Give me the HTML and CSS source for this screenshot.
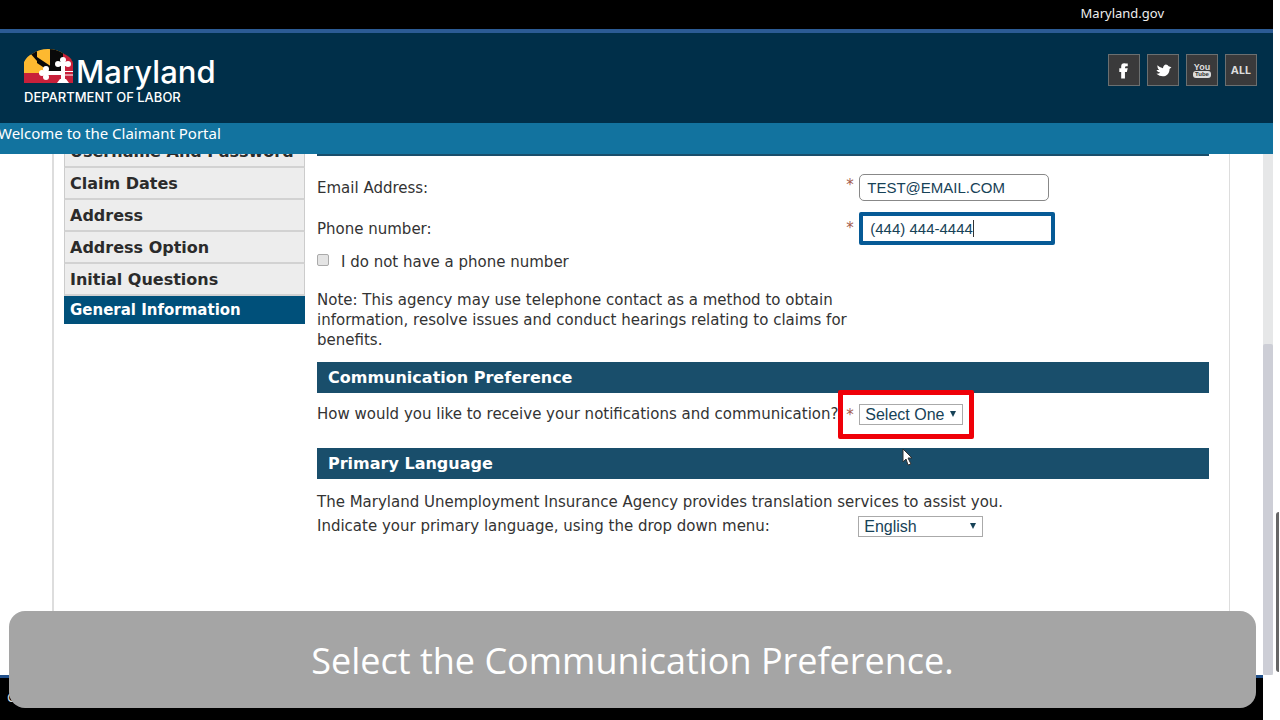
FILE: index.html
```html
<!DOCTYPE html>
<html lang="en">
<head>
<meta charset="utf-8">
<title>Claimant Portal</title>
<link rel="stylesheet" href="styles.css">
</head>
<body>
<div class="screen">
  <div class="topbar"><a href="#">Maryland.gov</a></div>
  <header class="header">
    <div class="brand">
      <div class="brand-row">
        <svg class="flag" viewBox="0 0 49 34" aria-hidden="true">
          <clipPath id="dome"><path d="M0 34V13Q3 7 8 5Q15 0 24 0Q33 0 40 5Q47 8 49 14V34Z"/></clipPath>
          <g clip-path="url(#dome)">
            <path fill="#fdb930" d="M0 0H49V24H0Z"/>
            <path fill="#090909" d="M26 0H49V24H26Z"/>
            <path fill="#090909" d="M6 4L13 0V8L34 22V24H28L13 14V12Z"/>
            <path fill="#c8203a" d="M39 0H49V34H0V24H39Z"/>
          </g>
          <path fill="none" stroke="#fff" stroke-width="4" d="M18 24H40M39 12V34M34 15H44M22 20V28"/>
          <path fill="none" stroke="#fff" stroke-width="1" d="M39 22.5H49M39 26H49"/>
          <g fill="#fff"><circle cx="39" cy="11" r="3"/><circle cx="34" cy="15" r="3"/><circle cx="44" cy="15" r="3"/><circle cx="22" cy="20" r="3"/><circle cx="18" cy="24" r="3"/><circle cx="22" cy="28" r="3"/><path d="M33 34L36 30H42L45 34Z"/></g>
        </svg>
        <span class="brand-name">Maryland</span>
      </div>
      <div class="brand-sub">DEPARTMENT OF LABOR</div>
    </div>
    <nav class="social">
      <a href="#" aria-label="Facebook"><svg viewBox="0 0 32 32"><path fill="#fff" d="M13 25V18H11V14H13V12Q13 8 18 9H20V12H18Q17 12 17 14H20L19 18H17V25Z"/></svg></a>
      <a href="#" aria-label="Twitter"><svg viewBox="0 0 32 32"><path fill="#fff" d="M10 11Q13 14 16 14Q16 11 19 10Q21 10 22 12L25 13L23 15Q23 20 19 22Q14 24 9 20Q12 20 13 19Q10 18 9 16H12Q10 15 10 11Z"/></svg></a>
      <a href="#" class="tube" aria-label="YouTube"><span>You</span><b>Tube</b></a>
      <a href="#">ALL</a>
    </nav>
  </header>
  <div class="welcome">Welcome to the Claimant Portal</div>

  <main class="viewport">
    <div class="portal">
      <nav class="steps">
        <a href="#">Username And Password</a>
        <a href="#">Claim Dates</a>
        <a href="#">Address</a>
        <a href="#">Address Option</a>
        <a href="#">Initial Questions</a>
        <a href="#" class="current">General Information</a>
      </nav>
      <form class="form">
        <div class="section-title contact-title"></div>
        <div class="row email-row">
          <label for="email">Email Address:</label>
          <div class="field"><span class="star">*</span><input id="email" class="text" type="text" value="TEST@EMAIL.COM"></div>
        </div>
        <div class="row phone-row">
          <label for="phone">Phone number:</label>
          <div class="field"><span class="star">*</span><span class="phone-box"><input id="phone" class="text focused" type="text" value="(444) 444-4444"><i class="caret"></i></span></div>
        </div>
        <div class="check-row"><input type="checkbox" id="nophone"><label for="nophone">I do not have a phone number</label></div>
        <p class="note">Note: This agency may use telephone contact as a method to obtain information, resolve issues and conduct hearings relating to claims for benefits.</p>
        <h2 class="section-title">Communication Preference</h2>
        <div class="row comm-row">
          <label for="comm">How would you like to receive your notifications and communication?</label>
          <div class="field"><span class="star">*</span>
            <span class="select-box short"><select id="comm"><option>Select One</option></select><svg viewBox="0 0 6 6"><path d="M0 0H6L3 6Z"/></svg></span>
            <span class="highlight"></span>
            <svg class="pointer" viewBox="0 0 11 18"><path d="M1 1V14L4 11L6 17L9 16L6 10H10Z"/></svg>
          </div>
        </div>
        <h2 class="section-title">Primary Language</h2>
        <p class="intro">The Maryland Unemployment Insurance Agency provides translation services to assist you.</p>
        <div class="row language-row">
          <label for="lang">Indicate your primary language, using the drop down menu:</label>
          <div class="field"><span class="star"></span><span class="select-box long"><select id="lang"><option>English</option></select><svg viewBox="0 0 6 6"><path d="M0 0H6L3 6Z"/></svg></span></div>
        </div>
      </form>
    </div>
    <div class="scrollbar"><div class="thumb"></div></div>
  </main>
  <footer class="footer">C</footer>
  <div class="edge"></div>
  <div class="caption">Select the Communication Preference.</div>
</div>
</body>
</html>
```
FILE: styles.css
```css
* { box-sizing: border-box; }
body { margin: 0; background: #fff; font-family: "DejaVu Sans", Verdana, sans-serif; font-size: 15px; color: #333; }
a { color: inherit; text-decoration: none; }
.screen { position: relative; display: flex; flex-direction: column; height: 100vh; overflow: hidden; padding-right: 7px; }
.topbar { height: 29px; padding: 0 109px; background: #000; color: #eee; text-align: right; font: 13px/26px "Noto Sans", sans-serif; }
.header { display: flex; justify-content: space-between; align-items: flex-start; height: 94px; padding: 16px 16px 0 24px; background: #002f49; border-top: 4px solid #2b5b94; color: #fff; }
.brand-row { display: flex; align-items: flex-start; gap: 3px; height: 41px; }
.flag { display: block; width: 49px; height: 34px; }
.brand-name { font: 500 31px/46px Inter, sans-serif; }
.brand-sub { font: 500 13px/14px Inter, sans-serif; }
.social { display: flex; gap: 7px; padding-top: 5px; }
.social a { display: flex; flex-direction: column; align-items: center; justify-content: center; width: 32px; height: 32px; border: 1px solid #6b6f70; background: #3a3a3b; font: 700 11px/12px "Noto Sans", sans-serif; color: #ddd; }
.social svg { width: 30px; height: 30px; }
.social .tube { font: 700 9px/8px "Liberation Sans", sans-serif; }
.tube b { padding: 0 2px; border-radius: 3px; background: #ddd; color: #333; font-size: 6px; line-height: 7px; }
.welcome { height: 31px; margin-left: -2px; background: #12739f; color: #fff; font: 15px/21px "Noto Sans", sans-serif; }
.viewport { display: flex; flex: 1; min-height: 0; overflow: hidden; }
.portal { display: flex; flex: 1; align-items: flex-start; gap: 12px; margin: 0 33px 0 52px; padding: 0 20px 0 10px; border: solid #ddd; border-width: 0 1px 0 2px; }
.steps { width: 241px; margin-top: -18px; font-size: 16px; font-weight: 700; color: #2b2b2b; }
.steps a { display: block; height: 32px; padding: 0 5px; border: 1px solid #ccc; border-bottom: 2px solid #d2d2d2; border-top: 0; background: #ededed; line-height: 32px; white-space: nowrap; }
.steps .current { height: 28px; border: 0; background: #00507a; color: #fff; font-size: 15px; line-height: 28px; padding-left: 6px; }
.form { flex: 1; min-width: 0; margin: 0; }
.section-title { height: 31px; margin: 0; padding-left: 11px; background: #194e6b; color: #fff; font-size: 16px; line-height: 32px; }
.contact-title { margin-top: -29px; }
.row { display: grid; grid-template-columns: 59fr 41fr; }
.row label { white-space: nowrap; line-height: 20px; }
.field { position: relative; display: flex; align-items: flex-start; }
.star { flex: none; width: 16px; padding-left: 3px; color: #a35a4b; line-height: 22px; }
.text { display: block; width: 190px; height: 27px; padding: 0 7px; border: 1px solid #888; border-radius: 5px; background: #fff; color: #174257; font: 15px "Liberation Sans", Arial, sans-serif; outline: 0; }
.email-row { padding-top: 18px; height: 56px; }
.email-row label { padding-top: 4px; }
.phone-row { height: 40px; }
.phone-row label, .phone-row .star { padding-top: 7px; }
.phone-row .star { padding-top: 5px; }
.phone-box { position: relative; }
.focused { width: 196px; height: 33px; border: 4px solid #065a96; border-radius: 2px; }
.caret { position: absolute; left: 114px; top: 8px; width: 1px; height: 17px; background: #333; }
.check-row { display: flex; align-items: center; gap: 12px; height: 20px; }
.check-row input { appearance: none; width: 12px; height: 12px; margin: 0 0 4px; border: 1px solid #aaa; border-radius: 2px; background: #e4e4e4; }
.note { width: 60%; margin: 18px 0 12px; line-height: 20px; }
.comm-row { height: 55px; padding-top: 11px; }
.select-box { position: relative; height: 21px; }
.select-box select { appearance: none; display: block; width: 100%; height: 100%; padding: 0 5px; border: 1px solid #aaa; border-radius: 0; background: #fff; color: #174257; font: 16px "Liberation Sans", Arial, sans-serif; }
.select-box svg { position: absolute; right: 7px; top: 7px; width: 6px; height: 6px; fill: #174257; }
.short { width: 104px; }
.long { width: 125px; }
.highlight { position: absolute; left: -5px; top: -14px; width: 136px; height: 49px; border: 5px solid #ef0008; border-radius: 2px; }
.pointer { position: absolute; left: 59px; top: 44px; z-index: 1; width: 11px; height: 18px; fill: #fff; stroke: #333; stroke-width: 1; }
.intro { margin: 13px 0 4px; line-height: 20px; white-space: nowrap; }
.language-row .star { width: 15px; }
.scrollbar { width: 10px; padding-top: 190px; background: #e6e7e8; }
.thumb { height: 100%; border-radius: 2px; background: #cdced6; }
.footer { height: 45px; margin-right: 10px; padding: 10px 7px; border-top: 3px solid #21508a; background: #000; color: #ddd; font: 13px/18px "Noto Sans", sans-serif; }
.edge { position: absolute; right: 1px; top: 512px; bottom: 48px; width: 3px; border-radius: 3px 0 0 3px; background: #666; }
.caption { position: absolute; left: 9px; right: 24px; bottom: 12px; height: 97px; border-radius: 16px; background: #a5a5a5; color: #fff; text-align: center; font: 36px/100px "Open Sans", "Noto Sans", sans-serif; }
```
